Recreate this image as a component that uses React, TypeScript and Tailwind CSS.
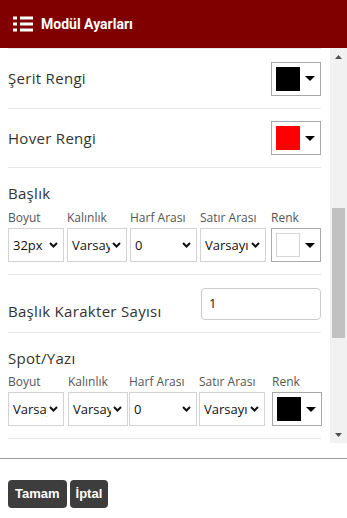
import React from "react";

const body = { fontFamily: '"Open Sans", "Noto Sans", sans-serif' };

function Chevron() {
  return (
    <svg width="9" height="6" viewBox="0 0 9 6" className="shrink-0">
      <polyline points="1,1 4.5,4.5 8,1" fill="none" stroke="#111" strokeWidth="2" />
    </svg>
  );
}

function Caret() {
  return (
    <svg width="10" height="5" viewBox="0 0 10 5" className="shrink-0">
      <polygon points="0,0 10,0 5,5" fill="#000" />
    </svg>
  );
}

function ColorBox({ color, light }: { color: string; light?: boolean }) {
  return (
    <div className="w-[50px] h-[34px] border border-[#a9a9a9] bg-white flex items-center pl-[4px] pr-[5px] justify-between shrink-0">
      <div
        className={"w-[24px] h-[24px] " + (light ? "border border-[#d4d4d4]" : "")}
        style={{ backgroundColor: color }}
      />
      <Caret />
    </div>
  );
}

function Select({ w, text }: { w: string; text: string }) {
  return (
    <div
      className={
        w +
        " h-[34px] border border-[#d3d3d3] bg-white flex items-center pl-[4px] pr-[5px] gap-[2px] overflow-hidden"
      }
    >
      <span className="flex-1 overflow-hidden whitespace-nowrap text-[13px] text-[#111] leading-[18px]">{text}</span>
      <Chevron />
    </div>
  );
}

function Field({ label, children, cls }: { label: string; children: React.ReactNode; cls?: string }) {
  return (
    <div className={"flex flex-col " + (cls || "")}>
      <div className="h-[16px] text-[12px] leading-[16px] text-[#555] whitespace-nowrap">{label}</div>
      <div className="mt-[2px]">{children}</div>
    </div>
  );
}

export default function App() {
  return (
    <div className="w-[347px] h-[518px] bg-white flex flex-col overflow-hidden" style={body}>
      <div className="h-[48px] bg-[#800000] flex items-center pl-[13px] shrink-0">
        <svg width="20" height="16" viewBox="0 0 20 16" className="shrink-0">
          <rect x="0" y="0.5" width="4" height="3" fill="#fff" />
          <rect x="7" y="0.5" width="13" height="3" fill="#fff" />
          <rect x="0" y="6.5" width="4" height="3" fill="#fff" />
          <rect x="7" y="6.5" width="13" height="3" fill="#fff" />
          <rect x="0" y="12.5" width="4" height="3" fill="#fff" />
          <rect x="7" y="12.5" width="13" height="3" fill="#fff" />
        </svg>
        <span
          className="ml-[8px] text-white font-bold text-[14px]"
          style={{ fontFamily: 'Roboto, "Liberation Sans", sans-serif' }}
        >
          Modül Ayarları
        </span>
      </div>

      <div className="h-[395px] flex shrink-0">
        <div className="flex-1 overflow-hidden pl-[8px] pr-[9px]">
          <div className="border-t border-[#e6e6e6]" />
          <div className="h-[60px] border-b border-[#e6e6e6] flex items-center justify-between">
            <span className="text-[15px] text-[#333] tracking-[0.3px]">Şerit Rengi</span>
            <ColorBox color="#000000" />
          </div>
          <div className="h-[59px] border-b border-[#e6e6e6] flex items-center justify-between">
            <span className="text-[15px] text-[#333] tracking-[0.3px]">Hover Rengi</span>
            <ColorBox color="#ff0000" />
          </div>
          <div className="h-[107px] border-b border-[#e6e6e6] pt-[15px]">
            <div className="h-[20px] text-[15px] leading-[20px] text-[#333] tracking-[0.3px]">Başlık</div>
            <div className="flex mt-[7px]">
              <Field label="Boyut">
                <Select w="w-[56px]" text="32px" />
              </Field>
              <Field label="Kalınlık" cls="ml-[3px]">
                <Select w="w-[60px]" text="Varsayılan" />
              </Field>
              <Field label="Harf Arası" cls="ml-[3px]">
                <Select w="w-[67px]" text="0" />
              </Field>
              <Field label="Satır Arası" cls="ml-[3px]">
                <Select w="w-[66px]" text="Varsayılan" />
              </Field>
              <Field label="Renk" cls="ml-[5px]">
                <ColorBox color="#ffffff" light />
              </Field>
            </div>
          </div>
          <div className="h-[58px] border-b border-[#e6e6e6] flex items-center justify-between">
            <span className="text-[15px] leading-[20px] text-[#333] tracking-[0.3px] mt-[15px]">
              Başlık Karakter Sayısı
            </span>
            <div className="w-[120px] h-[32px] border border-[#cccccc] rounded-[4px] flex items-center pl-[7px] text-[13px] text-[#111]">
              1
            </div>
          </div>
          <div className="h-[106px] border-b border-[#e6e6e6] pt-[15px]">
            <div className="h-[20px] text-[15px] leading-[20px] text-[#333] tracking-[0.3px]">Spot/Yazı</div>
            <div className="flex mt-[6px]">
              <Field label="Boyut">
                <Select w="w-[56px]" text="Varsayılan" />
              </Field>
              <Field label="Kalınlık" cls="ml-[4px]">
                <Select w="w-[60px]" text="Varsayılan" />
              </Field>
              <Field label="Harf Arası" cls="ml-[1px]">
                <Select w="w-[68px]" text="0" />
              </Field>
              <Field label="Satır Arası" cls="ml-[2px]">
                <Select w="w-[66px]" text="Varsayılan" />
              </Field>
              <Field label="Renk" cls="ml-[7px]">
                <ColorBox color="#000000" />
              </Field>
            </div>
          </div>
        </div>
        <div className="w-[17px] bg-[#f1f1f1] flex flex-col items-center shrink-0">
          <div className="h-[17px] flex items-center justify-center">
            <svg width="7" height="4" viewBox="0 0 7 4">
              <polygon points="0,4 7,4 3.5,0" fill="#505050" />
            </svg>
          </div>
          <div className="h-[143px]" />
          <div className="w-[13px] h-[130px] bg-[#c1c1c1]" />
          <div className="flex-1" />
          <div className="h-[17px] flex items-center justify-center">
            <svg width="7" height="4" viewBox="0 0 7 4">
              <polygon points="0,0 7,0 3.5,4" fill="#505050" />
            </svg>
          </div>
        </div>
      </div>

      <div className="h-[15px] shrink-0" />
      <div className="border-t border-[#a0a0a0] shrink-0" />
      <div
        className="flex gap-[3px] pl-[8px] pt-[21px]"
        style={{ fontFamily: '"Liberation Sans", Arial, sans-serif' }}
      >
        <button className="h-[28px] px-[7px] bg-[#3d3d3d] text-white font-bold text-[13px] rounded-[4px]">
          Tamam
        </button>
        <button className="h-[28px] px-[6px] bg-[#3d3d3d] text-white font-bold text-[13px] rounded-[4px]">
          İptal
        </button>
      </div>
    </div>
  );
}
